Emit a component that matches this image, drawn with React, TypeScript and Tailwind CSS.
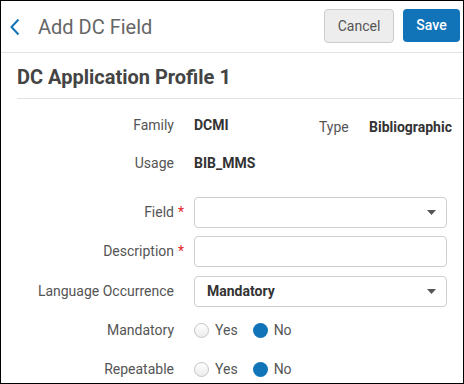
import { ReactNode } from 'react';

const Caret = () => (
  <svg width="9" height="5" viewBox="0 0 9 5" className="shrink-0">
    <path d="M0 0h9L4.5 5z" fill="#555" />
  </svg>
);

const Radio = ({ checked }: { checked?: boolean }) =>
  checked ? (
    <span className="w-[15px] h-[15px] rounded-full bg-[#1174b9] shrink-0" />
  ) : (
    <span className="w-[15px] h-[15px] rounded-full border border-[#c4c4c4] bg-gradient-to-b from-white to-[#ececec] shrink-0" />
  );

const Row = ({
  label,
  required,
  className,
  children,
}: {
  label: string;
  required?: boolean;
  className: string;
  children: ReactNode;
}) => (
  <div className={`flex items-center ${className}`}>
    <div className="w-[173px] text-right text-[14px] text-[#555] relative shrink-0">
      {label}
      {required && <span className="absolute left-[177px] text-[#e0262b]">*</span>}
    </div>
    <div className="ml-[20px] flex items-center flex-1 pr-[16px]">{children}</div>
  </div>
);

const RadioPair = () => (
  <div className="flex items-center text-[14px] text-[#555]">
    <Radio />
    <span className="ml-[6px]">Yes</span>
    <span className="ml-[15px]" />
    <Radio checked />
    <span className="ml-[6px]">No</span>
  </div>
);

const App = () => {
  return (
    <div className="w-[464px] h-[384px] border border-black bg-white overflow-hidden font-['Roboto',sans-serif]">
      <div className="h-[52px] flex items-center border-b border-[#e2e2e2] pl-[8px] pr-[3px]">
        <svg width="12" height="18" viewBox="0 0 12 18" className="mr-[17px]">
          <path d="M9.5 1.5 2.5 9l7 7.5" fill="none" stroke="#1174b9" strokeWidth="2" />
        </svg>
        <h1 className="text-[20px] text-[#666] flex-1">Add DC Field</h1>
        <button className="h-[34px] w-[70px] rounded-[4px] border border-[#ccc] bg-[#ededed] text-[14px] text-[#555] mb-[1px]">
          Cancel
        </button>
        <button className="h-[33px] w-[57px] ml-[9px] rounded-[4px] bg-[#1174b9] text-[14px] font-medium text-white mb-[2px]">
          Save
        </button>
      </div>

      <div className="mx-[16px] mr-0 h-[46px] flex items-center border-b border-[#e2e2e2]">
        <h2 className="text-[20px] font-bold text-[#444] pt-[9px] pb-[6px]">DC Application Profile 1</h2>
      </div>

      <div className="flex flex-col pt-[7px]">
        <Row label="Family" className="h-[38px]">
          <span className="w-[125px] text-[14px] font-bold text-[#333]">DCMI</span>
          <span className="w-[50px] text-[14px] text-[#555] mt-[4px]">Type</span>
          <span className="text-[14px] font-bold text-[#333] mt-[4px]">Bibliographic</span>
        </Row>
        <Row label="Usage" className="h-[38px]">
          <span className="text-[14px] font-bold text-[#333]">BIB_MMS</span>
        </Row>
        <Row label="Field" required className="h-[31px] mt-[15px]">
          <div className="h-[31px] w-[253px] rounded-[4px] border border-[#cfcfcf] flex items-center justify-end pr-[10px]">
            <Caret />
          </div>
        </Row>
        <Row label="Description" required className="h-[31px] mt-[8px]">
          <div className="h-[31px] w-[253px] rounded-[4px] border border-[#cfcfcf]" />
        </Row>
        <Row label="Language Occurrence" className="h-[31px] mt-[9px]">
          <div className="h-[31px] w-[253px] rounded-[4px] border border-[#cfcfcf] flex items-center justify-between pl-[12px] pr-[10px]">
            <span className="text-[14px] font-bold text-[#333]">Mandatory</span>
            <Caret />
          </div>
        </Row>
        <Row label="Mandatory" className="h-[38px] mt-[4px]">
          <RadioPair />
        </Row>
        <Row label="Repeatable" className="h-[38px] mt-[1px]">
          <RadioPair />
        </Row>
      </div>
    </div>
  );
};

export default App;
